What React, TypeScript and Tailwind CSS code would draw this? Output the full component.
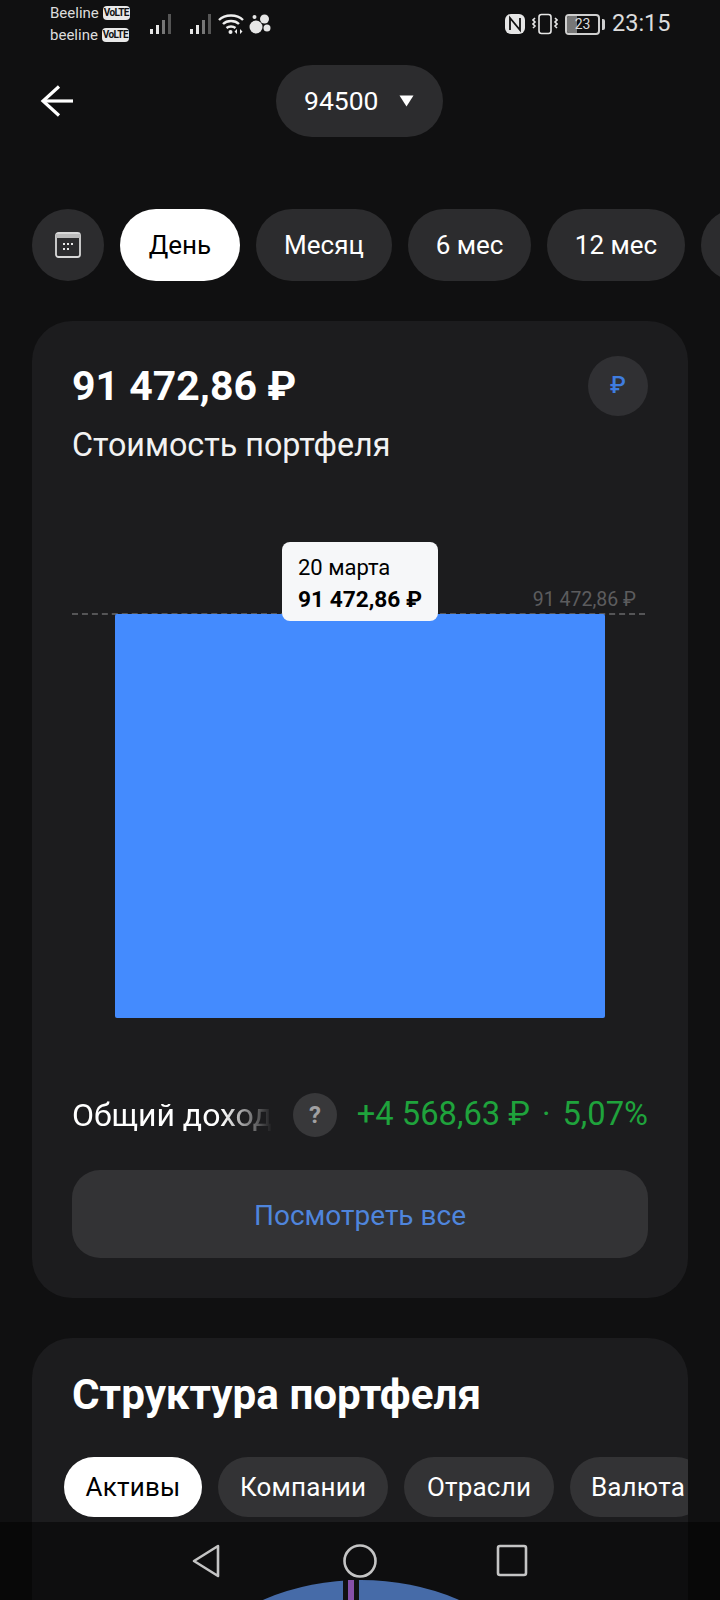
import React from 'react';

const periods = [
  { label: 'День', active: true, width: 'w-[120px]' },
  { label: 'Месяц', active: false, width: 'w-[136px]' },
  { label: '6 мес', active: false, width: 'w-[123px]' },
  { label: '12 мес', active: false, width: 'w-[138px]' },
  { label: '', active: false, width: 'w-[100px]' },
];

const chips = [
  { label: 'Активы', active: true, width: 'w-[138px]' },
  { label: 'Компании', active: false, width: 'w-[170px]' },
  { label: 'Отрасли', active: false, width: 'w-[150px]' },
  { label: 'Валюта', active: false, width: 'w-[136px]' },
];

function VolteBadge() {
  return (
    <span className="ml-[4px] flex h-[14px] w-[27px] items-center justify-center rounded-[4px] bg-[#e8e8e8] text-[10px] leading-none font-bold tracking-[-0.6px] text-[#111]">
      VoLTE
    </span>
  );
}

function Signal() {
  return (
    <svg width="22" height="20" viewBox="0 0 22 20">
      <rect x="0" y="15" width="3" height="5" fill="#e6e6e6" />
      <rect x="6" y="11" width="3" height="9" fill="#e6e6e6" />
      <rect x="12" y="6" width="3" height="14" fill="#777" />
      <rect x="18" y="0" width="3" height="20" fill="#555" />
    </svg>
  );
}

function StatusBar() {
  return (
    <div className="flex h-[46px] items-center pl-[50px] pt-[2px] text-[#dcdcdc]">
      <div className="w-[100px] text-[15px] leading-[22px]">
        <div className="flex items-center">Beeline<VolteBadge /></div>
        <div className="flex items-center">beeline<VolteBadge /></div>
      </div>
      <div className="flex items-center gap-[18px]">
        <Signal />
        <Signal />
      </div>
      <svg className="ml-[6px]" width="26" height="22" viewBox="0 0 26 22" fill="none">
        <path d="M1 7 C7 1 19 1 25 7" stroke="#eee" strokeWidth="2.4" />
        <path d="M5 11 C9 7 17 7 21 11" stroke="#eee" strokeWidth="2.4" />
        <path d="M8.5 15 C11 13 15 13 17.5 15" stroke="#eee" strokeWidth="2.4" />
        <circle cx="12.5" cy="19" r="2" fill="#eee" />
        <path d="M19 16 L19 21 L16.5 18.5 Z M22 16 L22 21 L24.5 18.5 Z" fill="#eee" />
      </svg>
      <svg className="ml-[5px]" width="22" height="22" viewBox="0 0 22 22" fill="#e6e6e6">
        <circle cx="7" cy="14" r="6.5" />
        <circle cx="15.5" cy="6" r="4.5" />
        <circle cx="18" cy="15" r="3.5" />
        <circle cx="5.5" cy="4" r="2" />
      </svg>
      <svg className="ml-[234px]" width="20" height="22" viewBox="0 0 20 22" fill="none">
        <rect x="0" y="1" width="20" height="20" rx="6" fill="#e6e6e6" />
        <path d="M5 17 V5 L15 17 V5" stroke="#111" strokeWidth="1.8" />
      </svg>
      <svg className="ml-[7px]" width="26" height="22" viewBox="0 0 26 22" fill="none" stroke="#e6e6e6" strokeWidth="1.6">
        <rect x="7" y="1.5" width="12" height="19" rx="2.5" />
        <path d="M3 5 L1 7 L3 9 L1 11 L3 13 L1 15 M23 5 L25 7 L23 9 L25 11 L23 13 L25 15" />
      </svg>
      <div className="relative ml-[7px] flex h-[21px] w-[35px] items-center justify-center overflow-hidden rounded-[4px] border-2 border-[#cfcfcf]">
        <div className="absolute inset-y-0 left-0 w-[10px] bg-[#777]" />
        <span className="relative text-[14px] leading-none">23</span>
      </div>
      <div className="ml-[2px] h-[11px] w-[3px] rounded-r-[2px] bg-[#cfcfcf]" />
      <span className="ml-[7px] text-[23.5px] leading-none">23:15</span>
    </div>
  );
}

function Header() {
  return (
    <div className="mt-[19px] flex h-[72px] items-center">
      <svg className="ml-[40px]" width="34" height="32" viewBox="0 0 34 32" fill="none" stroke="#fff" strokeWidth="3.2">
        <path d="M33 16 H3" />
        <path d="M19 1.5 L3 16 L19 30.5" />
      </svg>
      <button className="ml-[202px] flex h-[72px] w-[167px] items-center rounded-full bg-[#2c2c2e] pl-[28px] text-[26.5px] text-white">
        94500
        <svg className="ml-[21px]" width="15" height="12" viewBox="0 0 15 12" fill="#fff">
          <path d="M0.5 0.5 H14.5 L7.5 11.5 Z" />
        </svg>
      </button>
    </div>
  );
}

export default function App() {
  return (
    <div className="relative h-[1600px] w-[720px] overflow-hidden bg-[#101011] font-['Roboto',sans-serif] text-white">
      <StatusBar />
      <Header />

      {/* Period filter */}
      <div className="mt-[72px] flex gap-4 overflow-hidden pl-8">
        <div className="flex h-[72px] w-[72px] shrink-0 items-center justify-center rounded-full bg-[#2c2c2e]">
          <svg width="26" height="26" viewBox="0 0 26 26" fill="none">
            <rect x="1" y="1" width="24" height="24" rx="2.5" stroke="#d8d8d8" strokeWidth="1.8" />
            <path d="M1 2 H25 V6 H1 Z" fill="#bbb" />
            <g fill="#e8e8e8">
              <rect x="8" y="11" width="2" height="2" /><rect x="12" y="11" width="2" height="2" /><rect x="16" y="11" width="2" height="2" />
              <rect x="8" y="16" width="2" height="2" /><rect x="12" y="16" width="2" height="2" />
            </g>
          </svg>
        </div>
        {periods.map((p, i) => (
          <div
            key={i}
            className={`flex h-[72px] shrink-0 items-center justify-center rounded-full text-[26px] ${p.width} ${p.active ? 'bg-white text-black' : 'bg-[#2c2c2e] text-white'}`}
          >
            {p.label}
          </div>
        ))}
      </div>

      {/* Portfolio value card */}
      <section className="mx-8 mt-10 h-[977px] rounded-[40px] bg-[#1c1c1e] px-10 pt-[35px]">
        <div className="flex items-start justify-between">
          <div>
            <div className="text-[41px] leading-[60px] font-bold">91 472,86 ₽</div>
            <div className="mt-[9px] text-[32.3px] leading-[40px] text-[#f2f2f2]">Стоимость портфеля</div>
          </div>
          <div className="flex h-[60px] w-[60px] items-center justify-center rounded-full bg-[#303033] text-[23px] font-medium text-[#3f7de0]">₽</div>
        </div>

        <div className="relative mt-[123px] w-[573px]">
          <div className="pb-[1px] text-right pr-[9px] text-[19.5px] leading-[24px] text-[#5c5c5e]">91 472,86 ₽</div>
          <div className="border-t-2 border-dashed border-[#555557]" />
          <div className="-mt-[1px] ml-[43px] h-[404px] w-[490px] rounded-[2px] bg-[#448bfe]" />
          <div className="absolute top-[-46px] left-[210px] h-[79px] w-[156px] rounded-[8px] bg-[#f6f7f9] pl-4 pt-[12px] text-black">
            <div className="text-[22px] leading-[28px]">20 марта</div>
            <div className="mt-[4px] text-[22.7px] leading-[28px] font-bold">91 472,86 ₽</div>
          </div>
        </div>

        <div className="mt-[75px] flex h-[44px] items-center">
          <div className="w-[200px] overflow-hidden text-[32px] whitespace-nowrap [mask-image:linear-gradient(to_right,#000_75%,transparent_100%)]">Общий доход</div>
          <div className="ml-[21px] flex h-[44px] w-[44px] items-center justify-center rounded-full bg-[#38383a] text-[24px] font-bold text-[#a0a0a2]">?</div>
          <div className="ml-auto text-[32.7px] whitespace-nowrap text-[#1fa33c]">
            +4 568,63 ₽<span className="mx-[12px]">·</span>5,07%
          </div>
        </div>

        <button className="mt-[33px] h-[88px] w-full rounded-[28px] bg-[#333335] pt-[3px] text-[28px] text-[#4f85dc]">Посмотреть все</button>
      </section>

      {/* Portfolio structure card */}
      <section className="mx-8 mt-10 h-[400px] overflow-hidden rounded-[40px] bg-[#1c1c1e]">
        <h2 className="mt-[32px] pl-10 text-[42.2px] leading-[50px] font-bold">Структура портфеля</h2>
        <div className="mt-[37px] flex gap-4 pl-8">
          {chips.map(c => (
            <div
              key={c.label}
              className={`flex h-[60px] shrink-0 items-center justify-center rounded-full text-[26px] tracking-[0.2px] ${c.width} ${c.active ? 'bg-white text-black' : 'bg-[#333335] text-white'}`}
            >
              {c.label}
            </div>
          ))}
        </div>
        {/* donut chart peeking above the nav bar */}
        <svg className="relative z-10 mt-[63px] ml-[209px]" width="240" height="40" viewBox="0 0 240 40">
          <circle cx="120" cy="252" r="252" fill="#466ba8" />
          <rect x="102" y="0" width="16" height="40" fill="#111" />
          <rect x="107" y="0" width="6" height="40" fill="#8650a8" />
        </svg>
      </section>

      {/* Android nav bar */}
      <div className="absolute inset-x-0 bottom-0 flex h-[78px] items-start bg-black/50 pt-[21px]">
        <svg className="ml-[191px]" width="30" height="36" viewBox="0 0 30 36" fill="none" stroke="#c4c4c4" strokeWidth="2.6" strokeLinejoin="round">
          <path d="M27 3 L3 18 L27 33 Z" />
        </svg>
        <svg className="ml-[121px]" width="36" height="36" viewBox="0 0 36 36" fill="none" stroke="#c4c4c4" strokeWidth="2.6">
          <circle cx="18" cy="18" r="15.5" />
        </svg>
        <svg className="ml-[118px]" width="32" height="36" viewBox="0 0 32 36" fill="none" stroke="#c4c4c4" strokeWidth="2.6" strokeLinejoin="round">
          <rect x="2" y="3" width="28" height="29" rx="2" />
        </svg>
      </div>
    </div>
  );
}
